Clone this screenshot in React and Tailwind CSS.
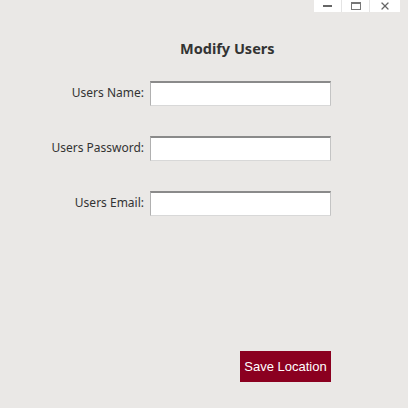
import { X } from "lucide-react"

const Field = ({ label }) => (
	<div className="flex items-center h-[25px]">
		<label className="w-[146px] pr-[6px] text-right text-[12px] text-[#333]">{label}</label>
		<input
			className="w-[181px] h-[25px] bg-white border-t-2 border-t-[#8a8a8a] border-l border-l-[#b0b0b0] border-r border-r-[#c4c4c4] border-b border-b-[#d8d8d8] outline-none"
			type="text"
		/>
	</div>
)

const App = () => {
	return (
		<div
			className="relative w-[408px] h-[408px] bg-[#eae8e6] overflow-hidden"
			style={{ fontFamily: '"Noto Sans", "DejaVu Sans", sans-serif' }}
		>
			<div className="absolute top-0 left-[314px] flex h-[12px] bg-white">
				<div className="w-[28px] flex items-center justify-center border-r border-[#e4e4e4]">
					<div className="w-[9px] h-[2px] bg-[#666]" />
				</div>
				<div className="w-[28px] flex items-center justify-center border-r border-[#e4e4e4]">
					<div className="w-[10px] h-[8px] border border-t-2 border-[#777]" />
				</div>
				<div className="w-[30px] flex items-center justify-center">
					<X size={12} strokeWidth={2.5} className="text-[#666]" />
				</div>
			</div>

			<div className="flex flex-col pt-[38px] pl-[4px]">
				<h1 className="ml-[176px] text-[14.5px] font-bold text-[#333]">
					Modify Users
				</h1>
				<div className="flex flex-col gap-[30px] mt-[21px]">
					<Field label="Users Name:" />
					<Field label="Users Password:" />
					<Field label="Users Email:" />
				</div>
				<div className="flex justify-end w-[327px] mt-[135px]">
					<button
						className="h-[31px] w-[91px] bg-[#8b0020] text-white text-[13px]"
						style={{ fontFamily: '"Liberation Sans", Arial, sans-serif' }}
					>
						Save Location
					</button>
				</div>
			</div>
		</div>
	)
}

export default App
